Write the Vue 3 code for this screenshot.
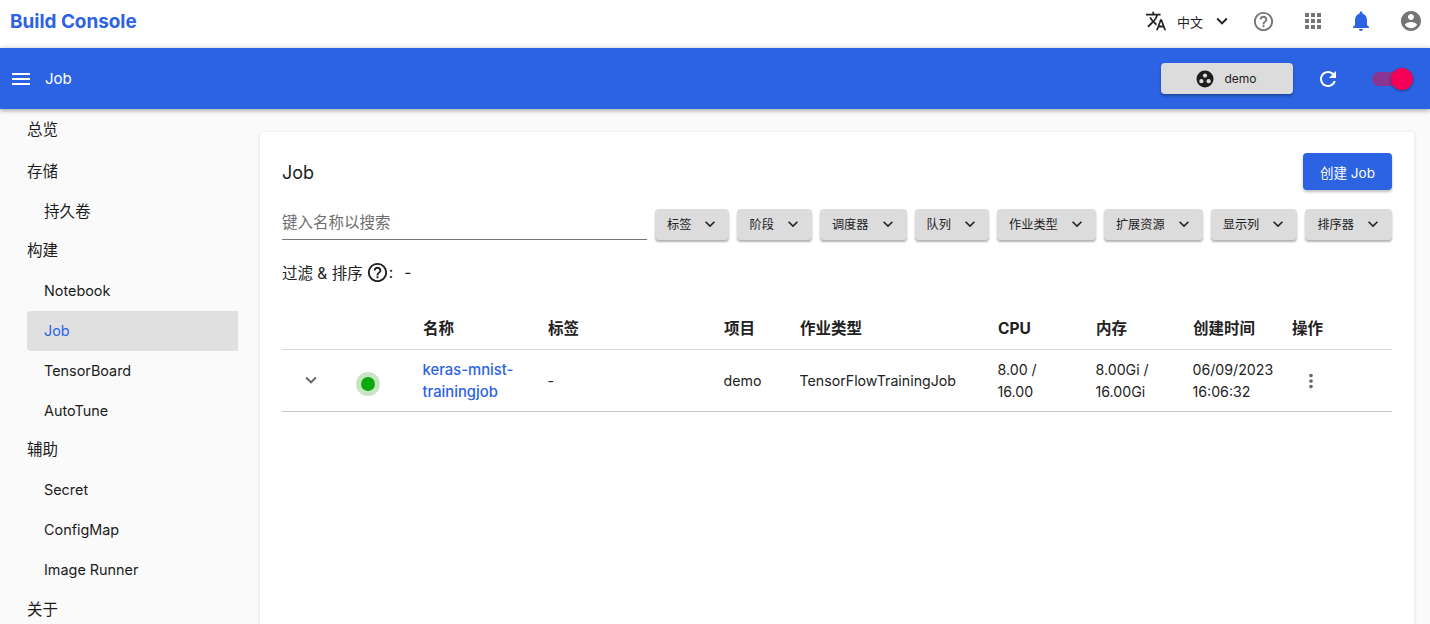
<script setup>
const icons = {
  translate: 'M12.87 15.07l-2.54-2.51.03-.03c1.74-1.94 2.98-4.17 3.71-6.53H17V4h-7V2H8v2H1v1.99h11.17C11.5 7.92 10.44 9.75 9 11.35 8.07 10.32 7.3 9.19 6.69 8h-2c.73 1.63 1.73 3.17 2.98 4.56l-5.09 5.02L4 19l5-5 3.11 3.11.76-2.04zM18.5 10h-2L12 22h2l1.12-3h4.75L21 22h2l-4.5-12zm-2.62 7l1.62-4.33L19.12 17h-3.24z',
  help: 'M11 18h2v-2h-2v2zm1-16C6.48 2 2 6.48 2 12s4.48 10 10 10 10-4.48 10-10S17.52 2 12 2zm0 18c-4.41 0-8-3.59-8-8s3.59-8 8-8 8 3.59 8 8-3.59 8-8 8zm0-14c-2.21 0-4 1.79-4 4h2c0-1.1.9-2 2-2s2 .9 2 2c0 2-3 1.75-3 5h2c0-2.25 3-2.5 3-5 0-2.21-1.79-4-4-4z',
  apps: 'M4 8h4V4H4v4zm6 12h4v-4h-4v4zm-6 0h4v-4H4v4zm0-6h4v-4H4v4zm6 0h4v-4h-4v4zm6-10v4h4V4h-4zm-6 4h4V4h-4v4zm6 6h4v-4h-4v4zm0 6h4v-4h-4v4z',
  bell: 'M12 22c1.1 0 2-.9 2-2h-4c0 1.1.89 2 2 2zm6-6v-5c0-3.07-1.64-5.64-4.5-6.32V4c0-.83-.67-1.5-1.5-1.5s-1.5.67-1.5 1.5v.68C7.63 5.36 6 7.92 6 11v5l-2 2v1h16v-1l-2-2z',
  account: 'M12 2C6.48 2 2 6.48 2 12s4.48 10 10 10 10-4.48 10-10S17.52 2 12 2zm0 3c1.66 0 3 1.34 3 3s-1.34 3-3 3-3-1.34-3-3 1.34-3 3-3zm0 14.2c-2.5 0-4.71-1.28-6-3.22.03-1.99 4-3.08 6-3.08 1.99 0 5.97 1.09 6 3.08-1.29 1.94-3.5 3.22-6 3.22z',
  menu: 'M3 18h18v-2H3v2zm0-5h18v-2H3v2zm0-7v2h18V6H3z',
  refresh: 'M17.65 6.35C16.2 4.9 14.21 4 12 4c-4.42 0-7.99 3.58-7.99 8s3.57 8 7.99 8c3.73 0 6.84-2.55 7.73-6h-2.08c-.82 2.33-3.04 4-5.65 4-3.31 0-6-2.69-6-6s2.69-6 6-6c1.66 0 3.14.69 4.22 1.78L13 11h7V4l-2.35 2.35z',
  chevron: 'M7.41 8.59L12 13.17l4.59-4.58L18 10l-6 6-6-6 1.41-1.41z',
  more: 'M12 8c1.1 0 2-.9 2-2s-.9-2-2-2-2 .9-2 2 .9 2 2 2zm0 2c-1.1 0-2 .9-2 2s.9 2 2 2 2-.9 2-2-.9-2-2-2zm0 6c-1.1 0-2 .9-2 2s.9 2 2 2 2-.9 2-2-.9-2-2-2z'
}
const nav = [
  { t: '总览', zh: true }, { t: '存储', zh: true }, { t: '持久卷', sub: true, zh: true }, { t: '构建', zh: true },
  { t: 'Notebook', sub: true }, { t: 'Job', sub: true, active: true },
  { t: 'TensorBoard', sub: true }, { t: 'AutoTune', sub: true }, { t: '辅助', zh: true },
  { t: 'Secret', sub: true }, { t: 'ConfigMap', sub: true },
  { t: 'Image Runner', sub: true }, { t: '关于', zh: true }
]
const filters = ['标签', '阶段', '调度器', '队列', '作业类型', '扩展资源', '显示列', '排序器']
const headers = ['', '', '名称', '标签', '项目', '作业类型', 'CPU', '内存', '创建时间', '操作']
</script>

<template>
  <div class="page">
    <header class="topbar">
      <div class="brand">Build Console</div>
      <div class="top-actions">
        <svg class="ic lang-ic" viewBox="0 0 24 24"><path :d="icons.translate" /></svg>
        <span class="lang">中文</span>
        <svg class="ic lang-chev" viewBox="0 0 24 24"><path :d="icons.chevron" /></svg>
        <svg class="ic grey help-ic" viewBox="0 0 24 24"><path :d="icons.help" /></svg>
        <svg class="ic grey apps-ic" viewBox="0 0 24 24"><path :d="icons.apps" /></svg>
        <svg class="ic blue bell-ic" viewBox="0 0 24 24"><path :d="icons.bell" /></svg>
        <svg class="ic grey acc-ic" viewBox="0 0 24 24"><path :d="icons.account" /></svg>
      </div>
    </header>

    <div class="appbar">
      <svg class="ic white menu-ic" viewBox="0 0 24 24"><path :d="icons.menu" /></svg>
      <span class="app-title">Job</span>
      <button class="project">
        <svg class="proj-ic" viewBox="0 0 18 18">
          <circle cx="9" cy="9" r="8.5" fill="#1d1d1d" />
          <circle cx="9" cy="5.6" r="2.1" fill="#dcdcdc" />
          <circle cx="5.4" cy="11.2" r="2.1" fill="#dcdcdc" />
          <circle cx="12.6" cy="11.2" r="2.1" fill="#dcdcdc" />
        </svg>
        <span>demo</span>
      </button>
      <svg class="ic white refresh-ic" viewBox="0 0 24 24"><path :d="icons.refresh" /></svg>
      <div class="toggle"><span class="thumb"></span></div>
    </div>

    <div class="body">
      <nav class="sidebar">
        <div
          v-for="n in nav"
          :key="n.t"
          class="nav-item"
          :class="{ sub: n.sub, active: n.active, zh: n.zh }"
        >{{ n.t }}</div>
      </nav>

      <main class="card">
        <div class="card-head">
          <h2 class="card-title">Job</h2>
          <button class="create">创建 Job</button>
        </div>

        <div class="toolbar">
          <div class="search">键入名称以搜索</div>
          <div class="filters">
            <button v-for="f in filters" :key="f" class="filter">
              <span>{{ f }}</span>
              <svg class="ic filter-chev" viewBox="0 0 24 24"><path :d="icons.chevron" /></svg>
            </button>
          </div>
        </div>

        <div class="applied">
          <span>过滤 &amp; 排序</span>
          <svg class="ic applied-ic" viewBox="0 0 24 24"><path :d="icons.help" /></svg>
          <span class="colon">:</span>
          <span class="dash">-</span>
        </div>

        <div class="table">
          <div class="row head">
            <div v-for="(h, i) in headers" :key="i" class="cell">{{ h }}</div>
          </div>
          <div class="row data">
            <div class="cell expand">
              <svg class="ic expand-ic" viewBox="0 0 24 24"><path :d="icons.chevron" /></svg>
            </div>
            <div class="cell status"><span class="dot"></span></div>
            <div class="cell"><a class="link">keras-mnist-trainingjob</a></div>
            <div class="cell">-</div>
            <div class="cell">demo</div>
            <div class="cell">TensorFlowTrainingJob</div>
            <div class="cell">8.00 /<br />16.00</div>
            <div class="cell">8.00Gi /<br />16.00Gi</div>
            <div class="cell">06/09/2023<br />16:06:32</div>
            <div class="cell">
              <svg class="ic more-ic" viewBox="0 0 24 24"><path :d="icons.more" /></svg>
            </div>
          </div>
        </div>
      </main>
    </div>
  </div>
</template>

<style>
html, body { margin: 0; overflow: hidden; background: #fafafa; }
</style>

<style scoped>
.page {
  width: 1430px;
  height: 624px;
  overflow: hidden;
  background: #fafafa;
  color: #222;
  font-family: Inter, "Noto Sans CJK SC", sans-serif;
  font-size: 14px;
}
.ic { display: block; flex: none; fill: currentColor; }
.grey { color: #757575; }
.blue { color: #2b63e3; }
.white { color: #fff; }

.topbar {
  height: 48px;
  display: flex;
  align-items: center;
  justify-content: space-between;
  background: #fff;
  padding: 0 7px 6px 10px;
  box-sizing: border-box;
}
.brand { color: #2b63e3; font-weight: 700; font-size: 18.9px; }
.top-actions { display: flex; align-items: center; }
.lang-ic { width: 22px; height: 22px; color: #222; }
.lang { font-size: 13px; margin-left: 10px; width: 26px; color: #222; }
.lang-chev { width: 22px; height: 22px; margin-left: 8px; color: #222; }
.help-ic { width: 23px; height: 23px; margin-left: 19px; }
.apps-ic { width: 24px; height: 24px; margin-left: 26px; }
.bell-ic { width: 24px; height: 24px; margin-left: 24px; }
.acc-ic { width: 24px; height: 24px; margin-left: 26px; }

.appbar {
  height: 61px;
  display: flex;
  align-items: center;
  background: #2b63e3;
  padding-left: 9px;
  box-shadow: 0 2px 4px rgba(0, 0, 0, .3), 0 -2px 4px rgba(0, 0, 0, .08);
  position: relative;
  z-index: 2;
}
.menu-ic { width: 24px; height: 24px; }
.app-title { color: #fff; margin-left: 12px; font-size: 15px; }
.project {
  margin-left: auto;
  width: 132px;
  height: 31px;
  display: flex;
  align-items: center;
  justify-content: center;
  gap: 10px;
  border: 0;
  border-radius: 4px;
  background: #dcdcdc;
  color: #222;
  font: inherit;
  font-size: 12px;
  box-shadow: 0 2px 3px rgba(0, 0, 0, .3);
  padding: 0 1px 0 0;
}
.proj-ic { width: 18px; height: 18px; }
.refresh-ic { width: 24px; height: 24px; margin-left: 23px; }
.toggle {
  position: relative;
  width: 36px;
  height: 14px;
  margin-left: 32px;
  margin-right: 22px;
  border-radius: 7px;
  background: #8a3594;
}
.thumb {
  position: absolute;
  right: -5px;
  top: -4px;
  width: 22px;
  height: 22px;
  border-radius: 50%;
  background: #f50057;
  box-shadow: 0 1px 3px rgba(0, 0, 0, .4);
}

.body { display: flex; align-items: flex-start; }
.sidebar {
  width: 238px;
  margin-right: 22px;
  padding-left: 27px;
  box-sizing: border-box;
  flex: none;
}
.nav-item {
  height: 39.8px;
  line-height: 39.8px;
  font-size: 14.4px;
  color: #1c1c1c;
  border-radius: 4px 0 0 4px;
}
.nav-item.zh { font-size: 15.5px; }
.nav-item:first-child { height: 42.8px; line-height: 42px; }
.nav-item.sub { padding-left: 17px; }
.nav-item.active { background: #e0e0e0; color: #2b63e3; }

.card {
  width: 1154px;
  height: 520px;
  margin-top: 23px;
  background: #fff;
  border-radius: 4px;
  box-shadow: 0 1px 4px rgba(0, 0, 0, .12);
  padding: 21px 22px 0;
  box-sizing: border-box;
}
.card-head { display: flex; justify-content: space-between; align-items: center; height: 37px; }
.card-title { margin: 1px 0 0; font-weight: 400; font-size: 18px; color: #222; }
.create {
  width: 89px;
  height: 37px;
  border: 0;
  border-radius: 4px;
  background: #2b63e3;
  color: #fff;
  font: inherit;
  font-size: 13.5px;
  padding: 0;
  box-shadow: 0 2px 3px rgba(0, 0, 0, .25);
}
.toolbar { display: flex; margin-top: 19px; gap: 8px; }
.search {
  width: 365px;
  height: 31px;
  line-height: 28px;
  box-sizing: border-box;
  border-bottom: 1px solid #777;
  color: #6f6f6f;
  font-size: 15.5px;
  flex: none;
}
.filters { flex: 1; display: flex; justify-content: space-between; }
.filter {
  height: 31px;
  display: flex;
  align-items: center;
  gap: 9px;
  padding: 0 9px 2px 12px;
  border: 0;
  border-radius: 4px;
  background: #dcdcdc;
  color: #222;
  font: inherit;
  font-size: 12.2px;
  box-shadow: 0 2px 2px rgba(0, 0, 0, .3);
}
.filter-chev { width: 20px; height: 20px; }

.applied {
  display: flex;
  align-items: center;
  margin-top: 20px;
  height: 24px;
  font-size: 15.5px;
}
.applied-ic { width: 23px; height: 23px; margin-left: 3px; color: #222; }
.dash { margin-left: 11px; }

.table { margin-top: 26px; }
.row {
  display: grid;
  grid-template-columns: 64px 65px 125px 176px 76px 198px 98px 97px 99px 112px;
  box-sizing: border-box;
  border-bottom: 1px solid #d5d5d5;
  font-size: 14.2px;
  color: #222;
}
.row.head { height: 40px; font-weight: 700; font-size: 15.5px; line-height: 22px; align-items: center; padding-bottom: 2px; }
.row.data { height: 62px; align-items: center; border-bottom-color: #c4c4c4; line-height: 22px; }
.cell { padding-left: 12px; min-width: 0; }
.data .cell { padding-left: 11.5px; }
.data .expand { padding-left: 18px; }
.expand-ic { width: 22px; height: 22px; color: #666; margin-top: -2px; }
.data .status { padding-left: 15px; }
.dot {
  display: block;
  width: 14px;
  height: 14px;
  margin-top: 6px;
  border-radius: 50%;
  background: #0aa80a;
  box-shadow: 0 0 0 5px #c6e3c2;
}
.link { color: #2b63e3; font-size: 14.8px; font-weight: 500; }
.more-ic { width: 22px; height: 22px; color: #666; margin-left: 8px; }
</style>
